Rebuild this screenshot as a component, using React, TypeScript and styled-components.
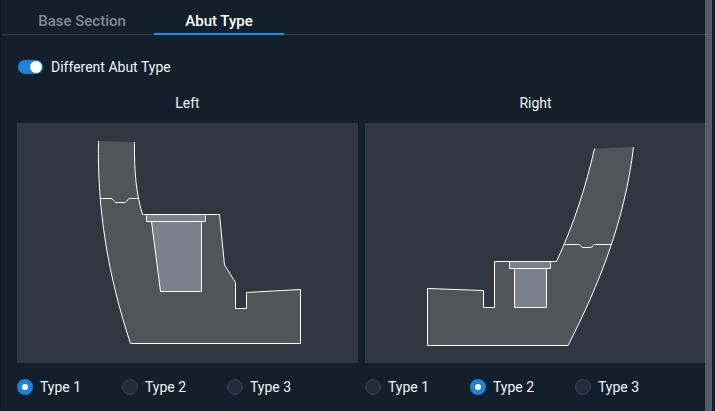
import React, { useState } from "react";
import styled, { createGlobalStyle } from "styled-components";

const GlobalStyle = createGlobalStyle`
  *, *::before, *::after { box-sizing: border-box; }
  body {
    margin: 0;
    background: #141f2c;
    color: #f2f3f5;
    font-family: Roboto, "Liberation Sans", sans-serif;
    font-size: 14px;
    line-height: 20px;
  }
`;

const Page = styled.main`
  position: relative;
  min-height: 100vh;
  border-left: 1px solid #14161a;
  background: #141f2c;
`;

const TabBar = styled.div`
  display: flex;
  align-items: flex-end;
  gap: 7px;
  height: 35px;
  margin: 0 3px 0 1px;
  padding-left: 15px;
  background: linear-gradient(#343f58, #343f58) bottom / 100% 1px no-repeat;
`;

const Tab = styled.button<{ $active: boolean }>`
  width: 130px;
  height: 26px;
  padding: 0;
  border: 0;
  border-bottom: 2px solid ${(p) => (p.$active ? "#1890e8" : "transparent")};
  background: none;
  color: ${(p) => (p.$active ? "#ffffff" : "#868a8f")};
  font: 500 15px/24px Roboto, "Liberation Sans", sans-serif;
  cursor: pointer;
`;

const Content = styled.section`
  padding: 22px 9px 14px 16px;
`;

const SwitchLabel = styled.label`
  display: inline-flex;
  align-items: center;
  gap: 8px;
  height: 20px;
  padding-left: 1px;
  cursor: pointer;
`;

const Switch = styled.input`
  appearance: none;
  display: flex;
  align-items: center;
  width: 25px;
  height: 14px;
  margin: 0;
  padding: 0 1px;
  border-radius: 7px;
  background: #3a4352;
  cursor: pointer;

  &::before {
    content: "";
    width: 12px;
    height: 12px;
    border-radius: 50%;
    background: #ffffff;
  }

  &:checked {
    justify-content: flex-end;
    background: #1b84d8;
  }
`;

const Columns = styled.div`
  display: grid;
  grid-template-columns: 1fr 1fr;
  gap: 7px;
  margin-top: 15px;
`;

const Side = styled.fieldset`
  min-width: 0;
  margin: 0;
  padding: 0;
  border: 0;
`;

const SideTitle = styled.legend`
  width: 100%;
  padding: 0 0 10px;
  text-align: center;
`;

const Diagram = styled.svg`
  display: block;
  width: 100%;
  background: #313741;
  fill: none;
  stroke: #ffffff;
  stroke-width: 1;
`;

const RadioRow = styled.div`
  display: flex;
  margin-top: 14px;
`;

const RadioLabel = styled.label`
  display: flex;
  align-items: center;
  gap: 7px;
  width: 105px;
  height: 20px;
  cursor: pointer;
`;

const Radio = styled.input`
  appearance: none;
  width: 16px;
  height: 16px;
  margin: 0;
  border: 1px solid #353f4e;
  border-radius: 50%;
  background: #242d3b;
  cursor: pointer;

  &:checked {
    border: 5px solid #1b84d8;
    background: #ffffff;
  }
`;

const ScrollThumb = styled.div`
  position: absolute;
  top: 0;
  right: 3px;
  bottom: 0;
  width: 7px;
  background: rgba(122, 124, 130, 0.65);
`;

const CONCRETE = "#515458";
const BLOCK = "#7b818a";

function LeftSection() {
  return (
    <Diagram viewBox="0 0 341 240" role="img" aria-label="Left abutment section">
      <path
        fill={CONCRETE}
        d="M117.5 19C117 49 119.5 72 125.5 91.5H202.5L207.5 142L218.5 159.5V185.5H229.5V169.5L283.5 166.5V220.5H113.5C91 153 80 85 81.5 18"
      />
      <path d="M83.5 75.5H95L98.5 79.5H108.5L112 75.5H121.5" />
      <path fill={BLOCK} d="M134.5 98.5H184.5V168.5H143.5Z" />
      <path fill={BLOCK} d="M129.5 91.5H188.5V98.5H129.5Z" />
    </Diagram>
  );
}

function RightSection() {
  return (
    <Diagram viewBox="0 0 341 240" role="img" aria-label="Right abutment section">
      <path
        fill={CONCRETE}
        d="M229.5 25.5C221 63 209 101 191.5 138.5H129.5V184.5H118.5V167.5L62.5 165.5V222.5H203C234 162 260 97 268.5 24"
      />
      <path d="M199.5 121.5H214.5L217 124.5H226L229.5 121.5H246.5" />
      <path fill={BLOCK} d="M149.5 145.5H181.5V184.5H149.5Z" />
      <path fill={BLOCK} d="M144.5 138.5H185.5V145.5H144.5Z" />
    </Diagram>
  );
}

interface AbutSideProps {
  title: string;
  name: string;
  initial: string;
  children: React.ReactNode;
}

function AbutSide({ title, name, initial, children }: AbutSideProps) {
  const [value, setValue] = useState(initial);
  return (
    <Side>
      <SideTitle>{title}</SideTitle>
      {children}
      <RadioRow>
        {["Type 1", "Type 2", "Type 3"].map((type) => (
          <RadioLabel key={type}>
            <Radio
              type="radio"
              name={name}
              value={type}
              checked={value === type}
              onChange={() => setValue(type)}
            />
            {type}
          </RadioLabel>
        ))}
      </RadioRow>
    </Side>
  );
}

export default function App() {
  const [tab, setTab] = useState("Abut Type");
  return (
    <>
      <GlobalStyle />
      <Page>
        <TabBar role="tablist">
          {["Base Section", "Abut Type"].map((name) => (
            <Tab
              key={name}
              type="button"
              role="tab"
              aria-selected={tab === name}
              $active={tab === name}
              onClick={() => setTab(name)}
            >
              {name}
            </Tab>
          ))}
        </TabBar>
        <Content>
          <SwitchLabel>
            <Switch type="checkbox" role="switch" defaultChecked />
            Different Abut Type
          </SwitchLabel>
          <Columns>
            <AbutSide title="Left" name="left-type" initial="Type 1">
              <LeftSection />
            </AbutSide>
            <AbutSide title="Right" name="right-type" initial="Type 2">
              <RightSection />
            </AbutSide>
          </Columns>
        </Content>
        <ScrollThumb />
      </Page>
    </>
  );
}
